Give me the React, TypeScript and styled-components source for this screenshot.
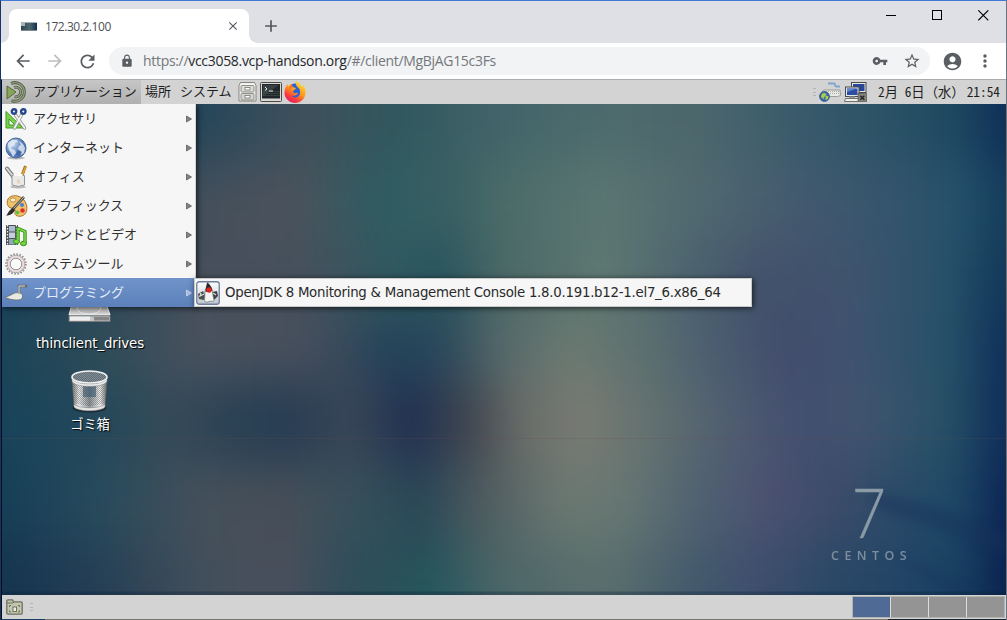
import React from 'react';
import styled, { createGlobalStyle } from 'styled-components';
import {
  MdArrowBack, MdArrowForward, MdRefresh, MdLock, MdVpnKey, MdStarBorder,
  MdAccountCircle, MdMoreVert, MdClose, MdAdd,
} from 'react-icons/md';

const Global = createGlobalStyle`
  * { box-sizing: border-box; }
  html, body { margin: 0; padding: 0; overflow: hidden; }
  svg { display: block; flex: none; }
`;

const jp = `"DejaVu Sans", "Noto Sans CJK JP", sans-serif`;

/* ---------- browser window ---------- */
const Browser = styled.div`
  width: 1007px;
  height: 620px;
  display: flex;
  flex-direction: column;
  border-top: 1px solid #4479d3;
  border-left: 1px solid #173468;
  border-right: 1px solid #6c7480;
  background: #dee0e6;
  overflow: hidden;
`;

const TabStrip = styled.div`
  height: 42px;
  flex: none;
  display: flex;
  align-items: flex-end;
  padding-left: 8px;
`;

const Tab = styled.div`
  position: relative;
  width: 240px;
  height: 34px;
  background: #fff;
  border-radius: 8px 8px 0 0;
  display: flex;
  align-items: center;
  padding: 0 9px 0 12px;
  &::before, &::after {
    content: '';
    position: absolute;
    bottom: 0;
    width: 8px;
    height: 8px;
  }
  &::before { left: -8px; background: radial-gradient(circle at 0 0, transparent 7.5px, #fff 8px); }
  &::after { right: -8px; background: radial-gradient(circle at 100% 0, transparent 7.5px, #fff 8px); }
`;

const TabTitle = styled.span`
  flex: 1;
  margin-left: 8px;
  padding-top: 1px;
  font: 12px/16px "Open Sans", sans-serif;
  letter-spacing: -0.45px;
  color: #4d5054;
`;

const NewTab = styled.div`
  margin: 0 0 7px 12px;
  color: #54575b;
`;

const Caption = styled.div`
  margin-left: auto;
  align-self: flex-start;
  display: flex;
  gap: 35px;
  padding: 9px 17px 0 0;
`;

const Toolbar = styled.div`
  height: 36px;
  flex: none;
  display: flex;
  align-items: center;
  background: #fff;
  padding: 0 11px 0 12px;
  color: #5a5d61;
`;

const NavIcon = styled.span<{ $faded?: boolean }>`
  width: 20px;
  margin-right: 12px;
  display: flex;
  color: ${p => (p.$faded ? '#bcbec1' : '#5a5d61')};
`;

const Omnibox = styled.div`
  width: 821px;
  height: 28px;
  border-radius: 14px;
  background: #f1f3f4;
  display: flex;
  align-items: center;
  padding: 0 9px 0 11px;
`;

const Url = styled.span`
  flex: 1;
  margin-left: 9px;
  font: 14px/20px "Open Sans", sans-serif;
  letter-spacing: -0.31px;
  color: #74777b;
  white-space: nowrap;
  b { font-weight: 400; color: #26282b; }
`;

const Actions = styled.span`
  display: flex;
  gap: 15px;
  align-items: center;
`;

const RightActions = styled.span`
  display: flex;
  gap: 12px;
  align-items: center;
  margin-left: 12px;
`;

/* ---------- remote desktop ---------- */
const Remote = styled.div`
  flex: 1;
  display: flex;
  flex-direction: column;
  border-top: 1px solid #a9abac;
  border-left: 1px solid #0a0d12;
  min-height: 0;
`;

const Panel = styled.div`
  height: 24px;
  flex: none;
  display: flex;
  align-items: center;
  background: #d3d3d3;
  font: 13px/20px ${jp};
  color: #1e1e1e;
`;

const TaskPanel = styled(Panel)`
  padding-left: 4px;
  gap: 7px;
`;

const PanelMenu = styled.div<{ $active?: boolean; $w: number }>`
  width: ${p => p.$w}px;
  height: 24px;
  display: flex;
  align-items: center;
  gap: 5px;
  padding-left: 4px;
  white-space: nowrap;
  background: ${p => (p.$active ? 'linear-gradient(#c6c6c6, #b0b0b0)' : 'none')};
`;

const Launchers = styled.div`
  display: flex;
  align-items: center;
  gap: 2px;
  margin-left: 3px;
`;

const Tray = styled.div`
  margin-left: auto;
  display: flex;
  align-items: center;
  gap: 3px;
  padding-right: 3px;
`;

const Grip = styled.span`
  width: 3px;
  height: 8px;
  background: repeating-linear-gradient(#b4b4b4 0 1px, transparent 1px 3.5px);
`;

const Clock = styled.span`
  width: 125px;
  margin-left: 8px;
  font: 13.33px/20px "Noto Sans CJK JP", sans-serif;
  white-space: pre;
  i { font-style: normal; font-feature-settings: "hwid"; }
  i:last-child { margin-left: 2px; }
`;

const Desktop = styled.div`
  position: relative;
  flex: 1;
  min-height: 0;
  overflow: hidden;
`;

const Wallpaper = styled.svg`
  position: absolute;
  inset: 0;
`;

const Branding = styled.div`
  position: absolute;
  left: 824px;
  top: 371px;
  width: 86px;
  display: flex;
  flex-direction: column;
  align-items: center;
  color: #97a6b0;
`;

const Seven = styled.span`
  font: 300 68px/74px Lato, sans-serif;
  color: #8a9ba5;
  transform: scaleX(0.86);
  -webkit-text-stroke: 0.5px #8a9ba5;
`;

const BrandName = styled.span`
  font: 600 12.5px/14px "Open Sans", sans-serif;
  letter-spacing: 5.4px;
  margin-right: -5px;
  opacity: 0.75;
`;

const DeskIcon = styled.div<{ $x: number; $y: number; $gap: number }>`
  position: absolute;
  left: ${p => p.$x}px;
  top: ${p => p.$y}px;
  width: 120px;
  display: flex;
  flex-direction: column;
  align-items: center;
  gap: ${p => p.$gap}px;
  font: 13.33px/17px ${jp};
  letter-spacing: -0.1px;
  color: #fff;
  text-shadow: 1px 1px 1px #000;
`;

const Menu = styled.div`
  position: absolute;
  left: 0;
  top: 0;
  width: 194px;
  background: #f6f6f6;
  border-right: 1px solid #d2d2d2;
  box-shadow: 1px 1px 6px rgba(0, 0, 0, 0.7);
`;

const MenuRow = styled.div<{ $active?: boolean }>`
  height: 29px;
  display: flex;
  align-items: center;
  gap: 5px;
  padding: 0 3px 0 2px;
  font: 13px/20px ${jp};
  color: ${p => (p.$active ? '#e4ecf8' : '#2f2f2f')};
  background: ${p => (p.$active ? 'linear-gradient(#7093ca, #5c80ba)' : 'none')};
  svg:last-child { margin-left: auto; }
`;

const SubMenu = styled.div`
  position: absolute;
  left: 192px;
  top: 174px;
  width: 558px;
  height: 29px;
  display: flex;
  align-items: center;
  gap: 5px;
  padding-left: 1px;
  background: #f6f6f6;
  border: 1px solid #c9c9c9;
  box-shadow: 1px 1px 6px rgba(0, 0, 0, 0.7);
  font: 13.33px/20px ${jp};
  letter-spacing: -0.26px;
  color: #2a2a2a;
  white-space: nowrap;
`;

const Pager = styled.div`
  margin-left: auto;
  display: flex;
  gap: 1px;
  padding: 1px;
  margin-right: 1px;
  background: #dcdcdc;
  box-shadow: inset 0 0 0 1px #b4b4b0;
`;

const Workspace = styled.span<{ $on?: boolean }>`
  width: 37px;
  height: 20px;
  background: ${p => (p.$on ? '#4f6a94' : '#949494')};
`;

const BottomEdge = styled.div`
  height: 1px;
  flex: none;
  background: linear-gradient(90deg, #1d3a6c 43px, #77786f 43px 886px, #18212c 886px);
`;

/* ---------- wallpaper colour field ---------- */
type Row = { y: number; c: [number, string][] };
const field: Row[] = [
  { y: 16, c: [[0, '#17415a'], [200, '#25465a'], [300, '#3f505b'], [400, '#30585e'], [500, '#42646a'], [600, '#4d6b6d'], [700, '#4c666c'], [800, '#385a6b'], [900, '#285064'], [960, '#1c4560'], [1005, '#0e2e57']] },
  { y: 96, c: [[0, '#17405a'], [200, '#444f5b'], [290, '#4b525c'], [380, '#2e5c61'], [450, '#3a6063'], [500, '#4a6b68'], [600, '#5b7672'], [700, '#50686f'], [800, '#43596f'], [900, '#32546c'], [960, '#24506a'], [1005, '#143c5b']] },
  { y: 176, c: [[0, '#17405a'], [200, '#474f5b'], [300, '#45505c'], [400, '#2f5960'], [440, '#28545d'], [500, '#4a6867'], [600, '#5e7872'], [700, '#49606e'], [760, '#43516c'], [850, '#3f536d'], [940, '#28526a'], [1005, '#113859']] },
  { y: 240, c: [[0, '#1b4457'], [100, '#2f4c58'], [200, '#4a525e'], [300, '#484f5c'], [390, '#22435a'], [440, '#2a485b'], [500, '#56696a'], [570, '#6b7a71'], [650, '#5a6e6f'], [700, '#4c6070'], [780, '#424c6b'], [850, '#3f5270'], [945, '#265168'], [1005, '#0e2e59']] },
  { y: 318, c: [[0, '#18435a'], [100, '#24485a'], [170, '#354958'], [240, '#263f53'], [290, '#263c53'], [350, '#394556'], [410, '#202f50'], [470, '#41464f'], [520, '#696d69'], [580, '#7a7b74'], [650, '#62716f'], [720, '#515f70'], [800, '#424e6f'], [860, '#41546e'], [945, '#265066'], [1005, '#0e2d59']] },
  { y: 398, c: [[0, '#163e58'], [100, '#284b5c'], [200, '#45505a'], [280, '#474e58'], [350, '#37505a'], [420, '#2a4757'], [480, '#4e5b5f'], [560, '#6b7871'], [620, '#677772'], [700, '#4f6071'], [770, '#4b5070'], [830, '#3d4b6a'], [900, '#284a68'], [950, '#1f4a66'], [1005, '#0b2455']] },
  { y: 478, c: [[0, '#153450'], [100, '#263f55'], [200, '#424f5b'], [280, '#4a4f5c'], [350, '#2e4d59'], [430, '#25565c'], [500, '#4c6668'], [600, '#5a706d'], [700, '#41586c'], [760, '#3e4d6d'], [830, '#2a4866'], [900, '#224466'], [960, '#173f60'], [1005, '#0a2150']] },
];

const Backdrop = () => (
  <Wallpaper width="1005" height="491" viewBox="0 0 1005 491">
    <defs>
      {field.map((r, i) => (
        <linearGradient id={`row${i}`} key={i} gradientUnits="userSpaceOnUse" x1="0" x2="1005" y1="0" y2="0">
          {r.c.map(([x, c]) => <stop key={x} offset={x / 1005} stopColor={c} />)}
        </linearGradient>
      ))}
      <filter id="soft" filterUnits="userSpaceOnUse" x="-60" y="-120" width="1125" height="740" colorInterpolationFilters="sRGB">
        <feGaussianBlur stdDeviation="14 26" />
      </filter>
      <filter id="haze" x="-20%" y="-50%" width="140%" height="200%"><feGaussianBlur stdDeviation="4" /></filter>
    </defs>
    <g filter="url(#soft)">
      {field.map((r, i) => {
        const top = i === 0 ? -120 : (field[i - 1].y + r.y) / 2;
        const bottom = i === field.length - 1 ? 620 : (field[i + 1].y + r.y) / 2;
        return <rect key={i} x="-60" width="1125" y={top} height={bottom - top + 0.5} fill={`url(#row${i})`} />;
      })}
    </g>
    <path d="M870 388l60 12 75 30v22l-70-26-62-22z" fill="#14305a" opacity=".4" filter="url(#haze)" />
    <path d="M890 450l60 26 30 16h-30z" fill="#12305c" opacity=".35" filter="url(#haze)" />
    <path d="M0 334.500H1005" stroke="#6a4a55" strokeWidth="1" opacity=".2" />
    <path d="M0 489.500H1005" stroke="#0c2238" strokeWidth="4" opacity=".3" />
  </Wallpaper>
);

/* ---------- icons ---------- */
const Favicon = () => (
  <svg width="16" height="9" viewBox="0 0 16 9">
    <defs><linearGradient id="fav"><stop stopColor="#2c4553" /><stop offset=".55" stopColor="#4d686c" /><stop offset="1" stopColor="#0f2d52" /></linearGradient></defs>
    <rect width="16" height="9" fill="url(#fav)" /><rect width="16" height="1" fill="#aab3b5" /><rect y="1" width="4" height="3" fill="#a9b3b8" />
    <rect y="8" width="16" height="1" fill="#7d8a91" />
  </svg>
);

const MateLogo = () => (
  <svg width="22" height="22" viewBox="0 0 22 22" fill="none">
    <path d="M1 5l9 6-9 7z" fill="#87a556" stroke="#55693a" />
    <path d="M5 2.600A9.300 9.300 0 1 1 5.500 19.600" stroke="#4f5b42" strokeWidth="3" />
    <path d="M5 2.600A9.300 9.300 0 1 1 5.500 19.600" stroke="#8f9f7b" strokeWidth="1.400" />
    <path d="M8 6.600a4.800 4.800 0 1 1 .5 9" stroke="#4f5b42" strokeWidth="2.800" />
    <path d="M8 6.600a4.800 4.800 0 1 1 .5 9" stroke="#93a37e" strokeWidth="1.200" />
  </svg>
);

const Cabinet = () => (
  <svg width="20" height="22" viewBox="0 0 20 22">
    <path d="M2.500 1.500h14l1.500 3v15.500h-17V4.500z" fill="#f3f3f1" stroke="#858580" />
    <rect x="3" y="4.500" width="13" height="6.500" rx="1" fill="#dcdcd8" stroke="#90908b" />
    <rect x="3" y="12.500" width="13" height="6.500" rx="1" fill="#d3d3cf" stroke="#90908b" />
    <rect x="7" y="6.500" width="5" height="2.500" fill="#fff" stroke="#777" strokeWidth=".8" />
    <rect x="7" y="14.500" width="5" height="2.500" fill="#fff" stroke="#777" strokeWidth=".8" />
  </svg>
);

const Terminal = () => (
  <svg width="22" height="20" viewBox="0 0 22 20">
    <rect x=".5" y=".5" width="21" height="19" rx="1" fill="#d9d9d6" stroke="#4b4b49" />
    <rect x="2" y="2" width="18" height="14.500" fill="#20262a" />
    <path d="M3 3h16L3 14z" fill="#4a5258" opacity=".6" />
    <path d="M2 11.500h18M2 13.500h18M2 9.500h18" stroke="#41504d" strokeWidth=".7" />
    <path d="M5 5l2 2-2 1.500M9 9h4" stroke="#dff0df" strokeWidth="1" fill="none" />
  </svg>
);

const Firefox = () => (
  <svg width="22" height="22" viewBox="0 0 22 22">
    <defs>
      <linearGradient id="fx" x1=".8" y1="0" x2=".2" y2="1"><stop stopColor="#ffe23a" /><stop offset=".45" stopColor="#ff9a1c" /><stop offset=".75" stopColor="#fb3a3c" /><stop offset="1" stopColor="#dc1a74" /></linearGradient>
    </defs>
    <circle cx="11" cy="10" r="7.500" fill="#2a63d8" />
    <path d="M12 0c4 2 5 4 5.500 6 1-.6 1.500-2 1.500-2 2 2.500 3 5 2.500 8.500C21 18 16.500 22 11 22S.5 17.500.5 12C.5 8 2 5 3.500 3c0 1 .3 1.800.8 2.200C5.500 3.800 7 3.300 8 2.500 7.700 4.500 8.300 6 10 6.500c2 .3 2 .5 1.800 1.200C11.500 8.500 9.500 9 9.300 10c-.3 1 0 1.500.5 2 2 .2 3-.8 4.200.2-1.500 2-4 3.500-6.500 2.300C10 18 15 16.500 16 12.500c.6-3-.5-5-2-6C12 5 11.500 3 12 0z" fill="url(#fx)" />
    <path d="M8 3C6 5 5 7 6.500 9.500 6 6.500 9 6.500 8 3z" fill="#ff5a2c" />
  </svg>
);

const KeyboardTray = () => (
  <svg width="22" height="20" viewBox="0 0 22 20" fill="none">
    <path d="M9 1.500h6c2 0 0 2.500 2 3h4" stroke="#7fa3cc" strokeWidth="1.800" />
    <path d="M4.500 8h16.500l.5 5.500-3 1H1l1-3z" fill="#e9e9e6" stroke="#9b9b97" />
    <path d="M5 9.500h15M5 11.500h15" stroke="#a9a9a5" strokeDasharray="1 1" />
    <circle cx="5.500" cy="14.500" r="4.800" fill="#3f6cb0" stroke="#254a80" />
    <path d="M3 11.500l3-.5 1.500 2-2 1.500-1 2.500-2.500-2zM6.500 14l3 0-.5 3-2.500 1z" fill="#a7cf4a" />
  </svg>
);

const NetworkTray = () => (
  <svg width="23" height="20" viewBox="0 0 23 20">
    <rect x="7.500" y=".5" width="14.500" height="10" fill="#e6e6e3" stroke="#484a4c" />
    <rect x="9" y="2" width="11.500" height="7" fill="#27479a" />
    <path d="M11 12h8l1 2h-8z" fill="#c9c9c5" stroke="#555" strokeWidth=".7" />
    <rect x="1.500" y="5" width="13.500" height="9.500" fill="#e6e6e3" stroke="#484a4c" />
    <rect x="3" y="6.500" width="10.500" height="6.500" fill="#2c4fa5" />
    <path d="M3 6.500h10L3 10z" fill="#6486cf" />
    <path d="M5 14.500h6v2H5z" fill="#999" /><path d="M1.500 16.500h13l.5 3H.5z" fill="#f0f0ed" stroke="#555" strokeWidth=".8" />
    <rect x="14" y="11.500" width="8.500" height="8.500" fill="#85857f" stroke="#484845" strokeWidth=".6" />
    <path d="M16.300 13.800l4 4m0-4l-4 4" stroke="#222" strokeWidth="1.300" />
  </svg>
);

const Accessories = () => (
  <svg width="24" height="24" viewBox="0 0 24 24" fill="none">
    <path d="M2 4.500v16.500h17z" fill="#79d04b" stroke="#3f9a1f" strokeLinejoin="round" />
    <path d="M5 12v6h6z" fill="#f6f6f6" stroke="#3f9a1f" />
    <path d="M11.500 8l9 13M17.500 8l-7 13" stroke="#8f938f" strokeWidth="3.400" strokeLinecap="round" />
    <path d="M11.500 8l9 13M17.500 8l-7 13" stroke="#f2f3f1" strokeWidth="1.800" strokeLinecap="round" />
    <circle cx="10" cy="4.500" r="2.200" stroke="#27488f" strokeWidth="2.400" /><circle cx="19.300" cy="4.500" r="2.200" stroke="#27488f" strokeWidth="2.400" />
  </svg>
);

const Internet = () => (
  <svg width="24" height="24" viewBox="0 0 24 24">
    <defs><radialGradient id="gl" cx=".35" cy=".3"><stop stopColor="#c5d9ef" /><stop offset="1" stopColor="#5279b4" /></radialGradient></defs>
    <ellipse cx="12" cy="22" rx="9" ry="1.500" fill="#bbb" />
    <circle cx="12" cy="12" r="10" fill="url(#gl)" stroke="#4a6a9c" />
    <path d="M4 7l4-3 5 0 1 2-3 1-1 3-3 1 1 2 3 1 1 3-3 4-2-4-2-3-1-4zM15 5l4 3 2 4-1 5-3 2-1-4-2-2 1-3 2-1z" fill="#e6eef8" opacity=".8" />
    <path d="M14 14l4 2-3 4-3-1z" fill="#3f68a5" />
  </svg>
);

const Office = () => (
  <svg width="24" height="24" viewBox="0 0 24 24" fill="none">
    <ellipse cx="14" cy="22" rx="8" ry="1.400" fill="#bbb" />
    <path d="M3 3.500l7 9" stroke="#777" strokeWidth="4" strokeLinecap="round" /><path d="M3 3.500l7 9" stroke="#d9d9d7" strokeWidth="2" strokeLinecap="round" />
    <path d="M21.500 1l-4 11" stroke="#a9741b" strokeWidth="3" /><path d="M21.500 2l-4 10" stroke="#e9b040" strokeWidth="1.200" />
    <path d="M8 10.500h12.500v9.500q-6 3-12.500 0z" fill="#e9e9e7" stroke="#949492" />
    <path d="M9.500 10h9" stroke="#fafafa" strokeWidth="2" />
    <path d="M13 14l3 1v4l-3-1z" fill="#e9d2bd" />
  </svg>
);

const Graphics = () => (
  <svg width="24" height="24" viewBox="0 0 24 24" fill="none">
    <path d="M4 5c3-5 12-4 16 1s4 13-1 15.500c-4 2-9 0-8-3s-1-4-4-4.500S2 9 4 5z" fill="#f0c26a" stroke="#a8732a" />
    <ellipse cx="9" cy="6" rx="3" ry="2" fill="#fbecc9" stroke="#a8732a" strokeWidth=".7" />
    <circle cx="18" cy="11" r="2" fill="#4d7fd0" /><circle cx="18.500" cy="16.500" r="2.300" fill="#e02f2c" /><circle cx="13.500" cy="18.500" r="2" fill="#64bf3a" />
    <path d="M20 3L8 16" stroke="#4e4e4e" strokeWidth="2.600" /><path d="M20 3L9 15" stroke="#b7b7b5" strokeWidth="1" />
    <path d="M9 14l2 2c-2 4-5 5.500-9 5.500 2-1 2-5 7-7.500z" fill="#2b2b2b" />
  </svg>
);

const Multimedia = () => (
  <svg width="24" height="24" viewBox="0 0 24 24" fill="none">
    <rect x="2" y="2" width="12" height="20" fill="#4c4f50" />
    <path d="M3.500 2v20M12.500 2v20" stroke="#eee" strokeWidth="1.300" strokeDasharray="1.500 1.500" />
    <rect x="5" y="3" width="6" height="5.500" fill="#a9bcd0" /><rect x="5" y="9.500" width="6" height="5.500" fill="#c3d0dc" /><rect x="5" y="16" width="6" height="5.500" fill="#8fa6bf" />
    <path d="M14 18V5.500l7 3V20" stroke="#368d14" strokeWidth="3.400" strokeLinejoin="round" />
    <ellipse cx="12.500" cy="18.500" rx="3" ry="2.200" fill="#74d63c" stroke="#368d14" /><ellipse cx="19.500" cy="20.500" rx="3" ry="2.200" fill="#74d63c" stroke="#368d14" />
    <path d="M14 17V5.500l7 3V19" stroke="#7edc45" strokeWidth="1.500" strokeLinejoin="round" />
  </svg>
);

const Gear = () => (
  <svg width="24" height="24" viewBox="0 0 24 24" fill="none">
    <circle cx="12" cy="12" r="9.800" stroke="#9a9292" strokeWidth="2" strokeDasharray="1.600 1.480" />
    <circle cx="12" cy="12" r="8.700" fill="#e8dcdc" stroke="#a39a9a" strokeWidth=".8" />
    <circle cx="12" cy="12" r="5.800" fill="#fafafa" stroke="#948d8d" />
    <circle cx="12" cy="12" r="7.200" stroke="#ecdfdf" />
  </svg>
);

const Programming = () => (
  <svg width="24" height="24" viewBox="0 0 24 24" fill="none">
    <path d="M1.500 16c5-1 8-4.500 12-4.500 3.500 0 5.500 2 5 4.500s-2.500 3-6 3-11-1.500-11-3z" fill="#e9e9e4" stroke="#696a66" strokeWidth=".8" />
    <path d="M15 12.500V5h7v1.500" stroke="#686a66" strokeWidth="2.400" /><path d="M15 12.500V5h6" stroke="#d9d9d3" strokeWidth="1" />
  </svg>
);

const Duke = () => (
  <svg width="24" height="24" viewBox="0 0 24 24">
    <defs><linearGradient id="dk" x2="0" y2="1"><stop stopColor="#fdfdfd" /><stop offset="1" stopColor="#bfc6cf" /></linearGradient></defs>
    <rect x=".75" y=".75" width="22.500" height="22.500" rx="2.500" fill="url(#dk)" stroke="#6d7f9a" strokeWidth="1.300" />
    <path d="M2 13l5-3 2 4-1 5-5-1z" fill="#4c4f52" /><path d="M16 11l5-1 1 5-4 4z" fill="#3f4245" />
    <path d="M12 1.500c2 3 4 6 4.500 10l1.500 8c-1 2-3 0-5 1s-4 1-4.500-1L9 10z" fill="#f3f3f3" stroke="#555" strokeWidth=".6" />
    <path d="M11 1.500c3 2 5 5 5.500 8l-7 1.500C9.500 7 11 4 11 1.500z" fill="#24272a" />
    <circle cx="13" cy="9" r="2.700" fill="#d9251c" />
    <path d="M8 13l-4 2 1-3M17 12l3 2" stroke="#ddd" strokeWidth="1.200" fill="none" />
  </svg>
);

const Arrow = ({ light }: { light?: boolean }) => (
  <svg width="6" height="8" viewBox="0 0 6 8">
    <path d="M.5 1L5.500 4 .5 7z" fill={light ? '#a9bddf' : '#858585'} stroke={light ? '#d5dff0' : '#505050'} strokeWidth=".7" />
  </svg>
);

const Drive = () => (
  <svg width="44" height="44" viewBox="0 0 44 44">
    <defs><linearGradient id="dr" x2="0" y2="1"><stop stopColor="#8b8b8b" /><stop offset="1" stopColor="#dcdcdc" /></linearGradient></defs>
    <path d="M6 18h30l6 18H1z" fill="url(#dr)" stroke="#f4f4f4" />
    <ellipse cx="21" cy="29" rx="12" ry="6" fill="#c4c4c4" stroke="#eee" />
    <rect x="1" y="37" width="41" height="5.500" fill="#c6c6c6" stroke="#777" strokeWidth=".8" />
    <rect x="2" y="37.500" width="20" height="4" fill="#eee" /><rect x="26" y="38" width="15" height="3.500" fill="#858585" />
  </svg>
);

const Trash = () => (
  <svg width="40" height="44" viewBox="0 0 40 44">
    <defs>
      <linearGradient id="tb"><stop stopColor="#77797a" /><stop offset=".2" stopColor="#ececec" /><stop offset=".5" stopColor="#8b9397" /><stop offset=".8" stopColor="#efefef" /><stop offset="1" stopColor="#6c6e6f" /></linearGradient>
      <pattern id="mesh" width="2" height="2" patternUnits="userSpaceOnUse"><rect width="1" height="1" fill="#444" /><rect x="1" y="1" width="1" height="1" fill="#444" /></pattern>
    </defs>
    <ellipse cx="19.500" cy="39" rx="17" ry="4.500" fill="#111" opacity=".5" />
    <path d="M2 11l2 26c3 6 28 6 31 0l2-26z" fill="url(#tb)" stroke="#5b5d5e" strokeWidth=".6" />
    <path d="M3 14l1.500 19c4 5 27 5 30 0L36 14z" fill="url(#mesh)" opacity=".4" />
    <path d="M13 17h13v11H13z" fill="#3f5b70" opacity=".65" />
    <path d="M4 35c4 5 27 5 31 0v3c-4 5-27 5-31 0z" fill="#e6e6e6" stroke="#777" strokeWidth=".5" />
    <path d="M2 9c1 8 34 8 35 0v3c-2 7-33 7-35 0z" fill="#efefef" stroke="#888" strokeWidth=".5" />
    <ellipse cx="19.500" cy="8" rx="17.500" ry="6" fill="#7d8e98" stroke="#f2f2f2" strokeWidth="1.600" />
    <ellipse cx="19.500" cy="8" rx="16.500" ry="5" fill="url(#mesh)" opacity=".45" />
  </svg>
);

const ShowDesktop = () => (
  <svg width="17" height="16" viewBox="0 0 17 16" fill="none">
    <path d="M.8 2q0-1.200 1.200-1.200h4.500l1 2H15q1.200 0 1.200 1.200v10q0 1.200-1.200 1.200H2Q.8 15.200.8 14z" fill="#c2c6ad" stroke="#6d7260" strokeWidth="1.300" />
    <path d="M1 4h6l1-1" stroke="#6d7260" /><rect x="7" y="8" width="3.500" height="4.500" fill="#eef0e2" stroke="#6d7260" />
    <path d="M3.500 8V6.500H5M12 6.500h1.500V8M3.500 11.500V13H5M12 13h1.500v-1.500" stroke="#6d7260" />
  </svg>
);

const categories = [
  { label: 'アクセサリ', icon: <Accessories /> },
  { label: 'インターネット', icon: <Internet /> },
  { label: 'オフィス', icon: <Office /> },
  { label: 'グラフィックス', icon: <Graphics /> },
  { label: 'サウンドとビデオ', icon: <Multimedia /> },
  { label: 'システムツール', icon: <Gear /> },
  { label: 'プログラミング', icon: <Programming />, active: true },
];

export default function App() {
  return (
    <Browser>
      <Global />
      <TabStrip>
        <Tab>
          <Favicon />
          <TabTitle>172.30.2.100</TabTitle>
          <MdClose size={14} color="#54575b" />
        </Tab>
        <NewTab><MdAdd size={20} /></NewTab>
        <Caption>
          <svg width="11" height="11"><path d="M0 5.500h10" stroke="#000" /></svg>
          <svg width="11" height="11"><rect x=".5" y=".5" width="9" height="9" fill="none" stroke="#000" /></svg>
          <svg width="11" height="11"><path d="M.3.300l10 10m0-10L.3 10.300" stroke="#000" strokeWidth="1.100" /></svg>
        </Caption>
      </TabStrip>
      <Toolbar>
        <NavIcon><MdArrowBack size={20} /></NavIcon>
        <NavIcon $faded><MdArrowForward size={20} /></NavIcon>
        <NavIcon><MdRefresh size={21} /></NavIcon>
        <Omnibox>
          <MdLock size={14} />
          <Url>https://<b>vcc3058.vcp-handson.org</b>/#/client/MgBjAG15c3Fs</Url>
          <Actions><MdVpnKey size={16} /><MdStarBorder size={18} /></Actions>
        </Omnibox>
        <RightActions><MdAccountCircle size={21} /><MdMoreVert size={20} /></RightActions>
      </Toolbar>

      <Remote>
        <Panel>
          <PanelMenu $active $w={139}><MateLogo />アプリケーション</PanelMenu>
          <PanelMenu $w={35}>場所</PanelMenu>
          <PanelMenu $w={59}>システム</PanelMenu>
          <Launchers><Cabinet /><Terminal /><Firefox /></Launchers>
          <Tray>
            <Grip />
            <KeyboardTray />
            <NetworkTray />
            <Clock><i>2</i>月<i> 6</i>日（水）<i>21:54</i></Clock>
          </Tray>
        </Panel>

        <Desktop>
          <Backdrop />
          <Branding>
            <Seven>7</Seven>
            <BrandName>CENTOS</BrandName>
          </Branding>
          <DeskIcon $x={28} $y={175} $gap={12}><Drive />thinclient_drives</DeskIcon>
          <DeskIcon $x={28} $y={265} $gap={3}><Trash />ゴミ箱</DeskIcon>
          <Menu>
            {categories.map(c => (
              <MenuRow key={c.label} $active={c.active}>
                {c.icon}
                <span>{c.label}</span>
                <Arrow light={c.active} />
              </MenuRow>
            ))}
          </Menu>
          <SubMenu>
            <Duke />
            OpenJDK 8 Monitoring &amp; Management Console 1.8.0.191.b12-1.el7_6.x86_64
          </SubMenu>
        </Desktop>

        <TaskPanel>
          <ShowDesktop />
          <Grip />
          <Pager>
            <Workspace $on /><Workspace /><Workspace /><Workspace />
          </Pager>
        </TaskPanel>
        <BottomEdge />
      </Remote>
    </Browser>
  );
}
